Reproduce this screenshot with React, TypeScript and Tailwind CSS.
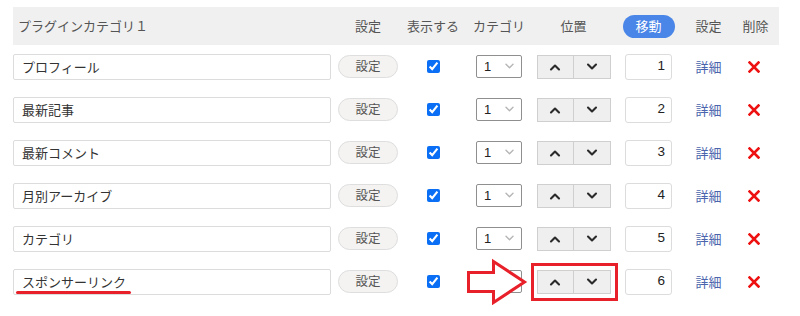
import type { ReactNode } from "react";

const rows = ["プロフィール", "最新記事", "最新コメント", "月別アーカイブ", "カテゴリ", "スポンサーリンク"];

const jp = { fontFamily: '"Noto Sans CJK JP", "Noto Sans", sans-serif' };

function Cell({ w, children, left }: { w: string; children?: ReactNode; left?: boolean }) {
  return <div className={`${w} flex shrink-0 items-center ${left ? "justify-start" : "justify-center"}`}>{children}</div>;
}

function Chevron({ up, className, weight = 1.6 }: { up?: boolean; className?: string; weight?: number }) {
  return (
    <svg viewBox="0 0 12 8" className={className} aria-hidden="true">
      <path
        d={up ? "M2 6.5 6 2.5l4 4" : "M2 1.5l4 4 4-4"}
        fill="none"
        stroke="currentColor"
        strokeWidth={weight}
        strokeLinecap="round"
        strokeLinejoin="round"
      />
    </svg>
  );
}

function Row({ name, index }: { name: string; index: number }) {
  return (
    <div className="flex h-[43px] items-center">
      <Cell w="w-[320px]" left>
        <div className="flex h-[26px] w-[318px] items-center rounded-[2px] border border-[#dcdcdc] bg-white pl-[8px] text-[13px] text-[#333]">
          {name}
        </div>
      </Cell>
      <Cell w="w-[70px]">
        <button
          type="button"
          className="h-[23px] w-[60px] rounded-full border border-[#dedede] bg-[#f4f3f1] text-[12.5px] text-[#555]"
        >
          設定
        </button>
      </Cell>
      <Cell w="w-[60px]">
        <input type="checkbox" defaultChecked className="m-0 h-[13px] w-[13px] accent-[#0b6ff5]" />
      </Cell>
      <Cell w="w-[72px]">
        <div className="flex h-[23px] w-[46px] items-center justify-between rounded-[2px] border border-[#8f8f8f] bg-white pl-[7px] pr-[6px] text-[13px] text-[#222]">
          <span className="font-['Liberation_Sans',sans-serif]">1</span>
          <Chevron className="h-[7px] w-[11px] text-[#b5b5b5]" />
        </div>
      </Cell>
      <Cell w="w-[77px]">
        <div className="flex">
          <button type="button" className="flex h-[24px] w-[37px] items-center justify-center border border-[#cfcfcf] bg-[#efefef] text-[#2a2a2a]">
            <Chevron up weight={2.1} className="h-[8px] w-[12px]" />
          </button>
          <button type="button" className="-ml-px flex h-[24px] w-[38px] items-center justify-center border border-[#cfcfcf] bg-[#efefef] text-[#2a2a2a]">
            <Chevron weight={2.1} className="h-[8px] w-[12px]" />
          </button>
        </div>
      </Cell>
      <Cell w="w-[73px]">
        <div className="flex h-[26px] w-[47px] items-center justify-end rounded-[3px] border border-[#dcdcdc] bg-white pr-[6px] font-['Liberation_Sans',sans-serif] text-[13.5px] text-[#222]">
          {index}
        </div>
      </Cell>
      <Cell w="w-[47px]">
        <span className="text-[13px] text-[#4a64ad]">詳細</span>
      </Cell>
      <Cell w="w-[47px]">
        <svg viewBox="0 0 12 12" className="mr-[3px] h-[12px] w-[12px]" aria-hidden="true">
          <path d="M1.5 1.5l9 9M10.5 1.5l-9 9" stroke="#ee1111" strokeWidth="2.6" strokeLinecap="square" />
        </svg>
      </Cell>
    </div>
  );
}

export default function App() {
  return (
    <div className="relative h-[316px] w-[800px] overflow-hidden bg-white" style={jp}>
      <div className="ml-[13px] w-[766px] pt-[7px]">
        <div className="flex h-[38px] items-center bg-[#f0f0f0] text-[13px] text-[#555]">
          <Cell w="w-[320px]" left>
            <span className="pl-[5px]">プラグインカテゴリ１</span>
          </Cell>
          <Cell w="w-[70px]">設定</Cell>
          <Cell w="w-[60px]">表示する</Cell>
          <Cell w="w-[72px]">カテゴリ</Cell>
          <Cell w="w-[77px]">位置</Cell>
          <Cell w="w-[73px]">
            <span className="flex h-[23px] w-[52px] items-center justify-center rounded-full bg-[#4a86e8] text-[13px] text-white">
              移動
            </span>
          </Cell>
          <Cell w="w-[47px]">設定</Cell>
          <Cell w="w-[47px]">削除</Cell>
        </div>
        {rows.map((name, i) => (
          <Row key={name} name={name} index={i + 1} />
        ))}
      </div>

      {/* annotations */}
      <span className="absolute left-[16px] top-[291px] h-[3px] w-[115px] rounded-full bg-[#e8202a]" />
      <svg className="absolute left-[460px] top-[255px] h-[50px] w-[80px]" viewBox="0 0 80 50" aria-hidden="true">
        <rect x="6" y="12" width="44" height="30" fill="white" />
        <path
          d="M8.5 17.5h25v-11l31 20.5-31 20.5v-11h-25z"
          fill="white"
          stroke="#e8202a"
          strokeWidth="3"
          strokeLinejoin="miter"
        />
      </svg>
      <span className="absolute left-[531px] top-[263px] h-[38px] w-[87px] border-[3px] border-[#e8202a]" />
    </div>
  );
}
